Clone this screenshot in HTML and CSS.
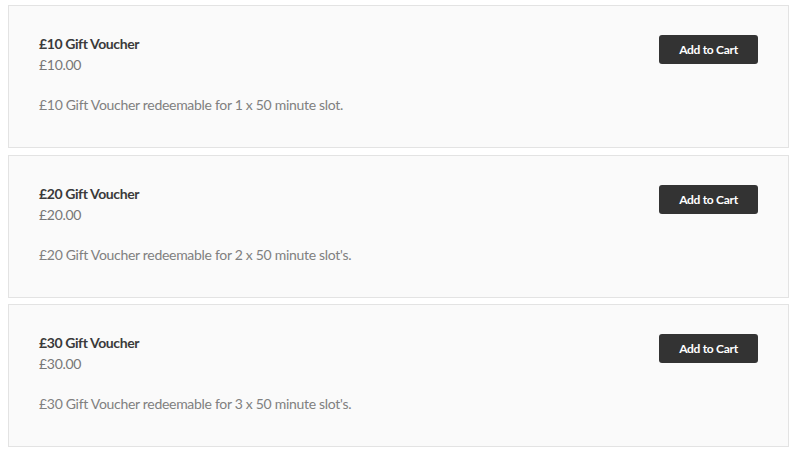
FILE: index.html
```html
<!DOCTYPE html>
<html lang="en">
<head>
<meta charset="utf-8">
<title>Gift Vouchers</title>
<link rel="stylesheet" href="styles.css">
</head>
<body>
<div class="list">
  <div class="card">
    <div class="info">
      <div class="title">£10 Gift Voucher</div>
      <div class="price">£10.00</div>
      <p class="desc">£10 Gift Voucher redeemable for 1 x 50 minute slot.</p>
    </div>
    <button class="btn">Add to Cart</button>
  </div>
  <div class="card">
    <div class="info">
      <div class="title">£20 Gift Voucher</div>
      <div class="price">£20.00</div>
      <p class="desc">£20 Gift Voucher redeemable for 2 x 50 minute slot's.</p>
    </div>
    <button class="btn">Add to Cart</button>
  </div>
  <div class="card">
    <div class="info">
      <div class="title">£30 Gift Voucher</div>
      <div class="price">£30.00</div>
      <p class="desc">£30 Gift Voucher redeemable for 3 x 50 minute slot's.</p>
    </div>
    <button class="btn">Add to Cart</button>
  </div>
</div>
</body>
</html>
```

FILE: styles.css
```css
html, body {
  margin: 0;
  padding: 0;
  background: #ffffff;
}
body {
  font-family: Lato, "Liberation Sans", sans-serif;
  font-size: 14px;
  line-height: 21px;
  letter-spacing: -0.3px;
  color: #333;
}
.list {
  padding: 5px 9px 0 8px;
  display: flex;
  flex-direction: column;
  gap: 6.5px;
}
.card {
  background: #fafafa;
  border: 1px solid #e3e3e3;
  padding: 27px 30px 32px 30px;
  display: flex;
  justify-content: space-between;
  align-items: flex-start;
}
.title {
  font-weight: 700;
  letter-spacing: -0.4px;
  color: #3a3a3a;
}
.price {
  color: #777;
}
.desc {
  margin: 19px 0 0 0;
  color: #808080;
}
.btn {
  margin-top: 2px;
  width: 99px;
  height: 29px;
  background: #333;
  color: #fff;
  border: none;
  border-radius: 3px;
  font-family: inherit;
  font-size: 12px;
  font-weight: 700;
  letter-spacing: -0.3px;
  padding: 0;
  cursor: pointer;
}
```
